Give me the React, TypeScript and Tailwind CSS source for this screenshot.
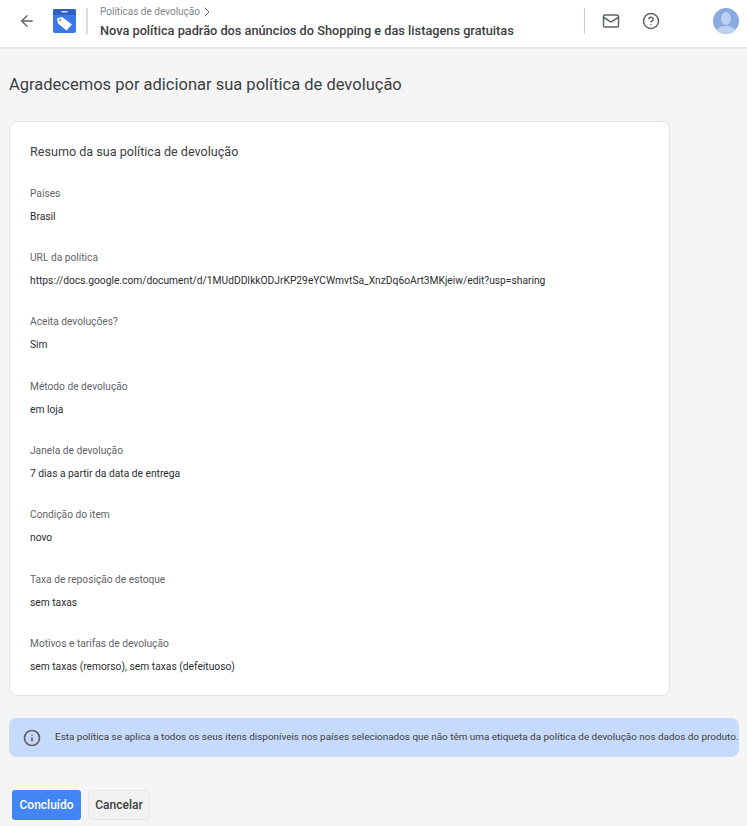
import { ArrowLeft, ChevronRight, Mail, CircleHelp, Info } from "lucide-react";

const ROWS = [
  { label: "Países", value: "Brasil" },
  { label: "URL da política", value: "https://docs.google.com/document/d/1MUdDDIkkODJrKP29eYCWmvtSa_XnzDq6oArt3MKjeiw/edit?usp=sharing" },
  { label: "Aceita devoluções?", value: "Sim" },
  { label: "Método de devolução", value: "em loja" },
  { label: "Janela de devolução", value: "7 dias a partir da data de entrega" },
  { label: "Condição do item", value: "novo" },
  { label: "Taxa de reposição de estoque", value: "sem taxas" },
  { label: "Motivos e tarifas de devolução", value: "sem taxas (remorso), sem taxas (defeituoso)" },
];

function Logo() {
  return (
    <svg width="23" height="24" viewBox="0 0 23 24" className="flex-shrink-0">
      <rect x="0" y="0" width="23" height="24" rx="2" fill="#3b78e7" />
      <path d="M0 6 V2 a2 2 0 0 1 2 -2 H21 a2 2 0 0 1 2 2 V6 Z" fill="#2f5fc4" />
      <rect x="8.5" y="2" width="6" height="1.5" fill="#c6dafc" />
      <path d="M4 9.5 L9 8 L19 15.5 L13.5 21.5 L5 14.5 Z" fill="#ffffff" />
      <circle cx="7" cy="11" r="1" fill="#3b78e7" />
    </svg>
  );
}

function Avatar() {
  return (
    <svg width="26" height="26" viewBox="0 0 26 26" className="flex-shrink-0">
      <defs>
        <clipPath id="av"><circle cx="13" cy="13" r="13" /></clipPath>
      </defs>
      <g clipPath="url(#av)">
        <rect width="26" height="26" fill="#8aaae0" />
        <ellipse cx="13" cy="10.5" rx="5" ry="6.5" fill="#bdd0f0" />
        <path d="M2 26 C3 19 9 18 13 18 C17 18 23 19 24 26 Z" fill="#bdd0f0" />
      </g>
    </svg>
  );
}

export default function App() {
  return (
    <div className="w-[747px] h-[826px] overflow-hidden bg-[#f5f5f5] font-['Roboto',sans-serif] text-[#3c4043]">
      <header className="h-[49px] pb-[5px] bg-white border-b-2 border-[#e8e8e8] flex items-center">
        <ArrowLeft className="w-[18px] h-[18px] ml-[18px] text-[#5f6368]" strokeWidth={1.8} />
        <div className="ml-[17px]"><Logo /></div>
        <div className="w-[2px] h-[26px] bg-[#dadce0] ml-[10px]" />
        <div className="ml-[12px] w-[484px]">
          <div className="flex items-center text-[10px] leading-[14px] text-[#80868b]">
            Políticas de devolução
            <ChevronRight className="w-[16px] h-[16px] ml-[-1px] text-[#5f6368]" strokeWidth={1.5} />
          </div>
          <div className="text-[12.75px] leading-[17px] mt-[2px] font-medium text-[#3c4043] whitespace-nowrap">Nova política padrão dos anúncios do Shopping e das listagens gratuitas</div>
        </div>
        <div className="w-[1px] h-[26px] bg-[#c4d0c4]" />
        <Mail className="w-[18px] h-[18px] ml-[17px] text-[#5f6368]" />
        <CircleHelp className="w-[18px] h-[18px] ml-[22px] text-[#5f6368]" />
        <div className="ml-[53px]"><Avatar /></div>
      </header>

      <h1 className="ml-[9px] mt-[25px] text-[16.5px] leading-[22px] font-normal text-[#3c4043]">Agradecemos por adicionar sua política de devolução</h1>

      <section className="ml-[9px] mt-[25px] w-[661px] h-[575px] bg-white border border-[#e3e3e3] rounded-[8px] pl-[20px] pt-[21px]">
        <h2 className="text-[12.6px] leading-[17px] font-normal text-[#3c4043]">Resumo da sua política de devolução</h2>
        <div className="mt-[26.8px] flex flex-col gap-[27.3px]">
          {ROWS.map(({ label, value }) => (
            <div key={label}>
              <div className="text-[10.2px] leading-[14px] text-[#5f6368]">{label}</div>
              <div className="text-[10.25px] leading-[14px] mt-[9px] text-[#2a2d30]">{value}</div>
            </div>
          ))}
        </div>
      </section>

      <div className="ml-[9px] mt-[22px] w-[730px] h-[39px] bg-[#c6dafc] rounded-[8px] flex items-center">
        <Info className="w-[18px] h-[18px] ml-[14px] text-[#5f6368] flex-shrink-0" strokeWidth={2.2} />
        <p className="ml-[14px] text-[9.91px] whitespace-nowrap text-[#3c4043]">Esta política se aplica a todos os seus itens disponíveis nos países selecionados que não têm uma etiqueta da política de devolução nos dados do produto.</p>
      </div>

      <div className="ml-[12px] mt-[33px] flex gap-[7px]">
        <button className="w-[69px] h-[30px] bg-[#4285f4] text-white rounded-[3px] text-[12px] font-medium">Concluído</button>
        <button className="w-[62px] h-[30px] bg-[#f1f1f1] border border-[#e8e8e8] text-[#3c4043] rounded-[3px] text-[12px] font-medium">Cancelar</button>
      </div>
    </div>
  );
}
